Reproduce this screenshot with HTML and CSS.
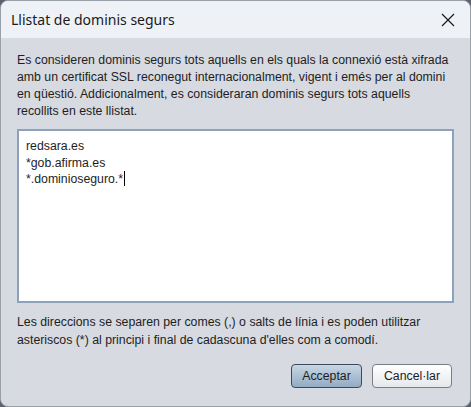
FILE: index.html
```html
<!DOCTYPE html>
<html>
<head>
<meta charset="utf-8">
<link rel="stylesheet" href="styles.css">
</head>
<body>
<div class="window">
  <div class="titlebar">
    <span class="title">Llistat de dominis segurs</span>
    <svg class="close" width="16" height="16" viewBox="0 0 16 16"><path d="M2 2 L14 14 M14 2 L2 14" stroke="#1a1a1a" stroke-width="1.2" fill="none"/></svg>
  </div>
  <div class="content">
    <p class="info">Es consideren dominis segurs tots aquells en els quals la connexió està xifrada amb un certificat SSL reconegut internacionalment, vigent i emés per al domini en qüestió. Addicionalment, es consideraran dominis segurs tots aquells recollits en este llistat.</p>
    <div class="textarea">
      <div>redsara.es</div>
      <div>*gob.afirma.es</div>
      <div>*.dominioseguro.*<span class="caret"></span></div>
    </div>
    <p class="note">Les direccions se separen per comes (,) o salts de línia i es poden utilitzar asteriscos (*) al principi i final de cadascuna d'elles com a comodí.</p>
    <div class="buttons">
      <button class="btn primary">Acceptar</button>
      <button class="btn">Cancel·lar</button>
    </div>
  </div>
</div>
</body>
</html>
```
FILE: styles.css
```css
html, body {
  margin: 0;
  padding: 0;
  background: #5a6270;
  width: 471px;
  height: 407px;
  overflow: hidden;
}
.window {
  width: 469px;
  height: 405px;
  border: 1px solid #9aa0a8;
  border-radius: 8px;
  overflow: hidden;
  display: flex;
  flex-direction: column;
  background: #d7dae0;
}
.titlebar {
  height: 37px;
  background: #eef2f7;
  display: flex;
  align-items: center;
  justify-content: space-between;
  padding: 0 14px 0 10px;
  flex: none;
}
.title {
  font-family: "Noto Sans", sans-serif;
  font-size: 14px;
  color: #1a1a1a;
}
.close {
  display: block;
}
.content {
  flex: 1;
  padding: 14px 16px 0 16px;
  font-family: "Liberation Sans", Arial, sans-serif;
  font-size: 12.3px;
  color: #1e1e1e;
  display: flex;
  flex-direction: column;
}
.info {
  margin: 0;
  line-height: 17px;
}
.textarea {
  margin-top: 9px;
  height: 156px;
  background: #fff;
  border: 2px solid #8ca2bd;
  padding: 7px 7px;
  line-height: 16.5px;
  font-size: 12.3px;
  flex: none;
}
.caret {
  display: inline-block;
  width: 1px;
  height: 15px;
  background: #000;
  vertical-align: -3px;
  margin-left: 1px;
}
.note {
  margin: 10px 0 0 0;
  line-height: 18px;
}
.buttons {
  display: flex;
  justify-content: flex-end;
  gap: 10px;
  margin-top: 15px;
  padding-right: 2px;
}
.btn {
  font-family: "Liberation Sans", Arial, sans-serif;
  font-size: 12.3px;
  color: #1e1e1e;
  height: 24px;
  width: 80px;
  padding: 0;
  border-radius: 4px;
  border: 1px solid #7a7e84;
  background: linear-gradient(#ffffff, #e6e8eb);
}
.btn.primary {
  width: 71px;
  border-color: #3c4a5c;
  background: linear-gradient(#c7d6e4, #93abc2);
}
```
